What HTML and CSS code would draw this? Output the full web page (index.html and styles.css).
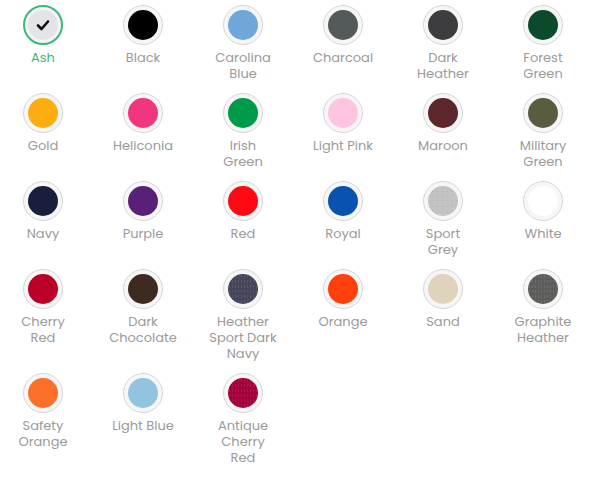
FILE: index.html
```html
<!DOCTYPE html>
<html lang="en">
  <head>
    <meta charset="UTF-8" />
    <meta name="viewport" content="width=device-width, initial-scale=1.0" />
    <title>Colors</title>
    <link rel="stylesheet" href="styles.css">
  </head>

  <body>
    <div class="colors">
      <div class="color selected">
        <span class="swatch"><span class="fill" style="background: #e4e4e8;">
          <svg class="check" width="14" height="12" viewBox="0 0 14 12"><path d="M2 6.5 L5.5 10 L12 2.5" fill="none" stroke="#111" stroke-width="2.6" stroke-linecap="round" stroke-linejoin="round"/></svg>
        </span></span>
        <span class="name">Ash</span>
      </div>
      <div class="color">
        <span class="swatch"><span class="fill" style="background: #000000;"></span></span>
        <span class="name">Black</span>
      </div>
      <div class="color">
        <span class="swatch"><span class="fill" style="background: #6fa7da;"></span></span>
        <span class="name">Carolina<br />Blue</span>
      </div>
      <div class="color">
        <span class="swatch"><span class="fill" style="background: #535a59;"></span></span>
        <span class="name">Charcoal</span>
      </div>
      <div class="color">
        <span class="swatch"><span class="fill" style="background: #3d3d3f;"></span></span>
        <span class="name">Dark<br />Heather</span>
      </div>
      <div class="color">
        <span class="swatch"><span class="fill" style="background: #0b4a2b;"></span></span>
        <span class="name">Forest<br />Green</span>
      </div>

      <div class="color">
        <span class="swatch"><span class="fill" style="background: #fdad10;"></span></span>
        <span class="name">Gold</span>
      </div>
      <div class="color">
        <span class="swatch"><span class="fill" style="background: #f2357f;"></span></span>
        <span class="name">Heliconia</span>
      </div>
      <div class="color">
        <span class="swatch"><span class="fill" style="background: #009b4a;"></span></span>
        <span class="name">Irish<br />Green</span>
      </div>
      <div class="color">
        <span class="swatch"><span class="fill" style="background: #ffc4e0;"></span></span>
        <span class="name">Light Pink</span>
      </div>
      <div class="color">
        <span class="swatch"><span class="fill" style="background: #5d262b;"></span></span>
        <span class="name">Maroon</span>
      </div>
      <div class="color">
        <span class="swatch"><span class="fill" style="background: #595c3f;"></span></span>
        <span class="name">Military<br />Green</span>
      </div>

      <div class="color">
        <span class="swatch"><span class="fill" style="background: #181e3d;"></span></span>
        <span class="name">Navy</span>
      </div>
      <div class="color">
        <span class="swatch"><span class="fill" style="background: #582177;"></span></span>
        <span class="name">Purple</span>
      </div>
      <div class="color">
        <span class="swatch"><span class="fill" style="background: #ff0a14;"></span></span>
        <span class="name">Red</span>
      </div>
      <div class="color">
        <span class="swatch"><span class="fill" style="background: #0a52b0;"></span></span>
        <span class="name">Royal</span>
      </div>
      <div class="color">
        <span class="swatch"><span class="fill textured" style="background-color: #c2c2c2;"></span></span>
        <span class="name">Sport<br />Grey</span>
      </div>
      <div class="color">
        <span class="swatch"><span class="fill" style="background: #ffffff;"></span></span>
        <span class="name">White</span>
      </div>

      <div class="color">
        <span class="swatch"><span class="fill" style="background: #ba0026;"></span></span>
        <span class="name">Cherry<br />Red</span>
      </div>
      <div class="color">
        <span class="swatch"><span class="fill" style="background: #3d2b22;"></span></span>
        <span class="name">Dark<br />Chocolate</span>
      </div>
      <div class="color">
        <span class="swatch"><span class="fill textured" style="background-color: #46465a;"></span></span>
        <span class="name">Heather<br />Sport Dark<br />Navy</span>
      </div>
      <div class="color">
        <span class="swatch"><span class="fill" style="background: #ff400d;"></span></span>
        <span class="name">Orange</span>
      </div>
      <div class="color">
        <span class="swatch"><span class="fill" style="background: #e0d3bd;"></span></span>
        <span class="name">Sand</span>
      </div>
      <div class="color">
        <span class="swatch"><span class="fill textured" style="background-color: #5d5d5b;"></span></span>
        <span class="name">Graphite<br />Heather</span>
      </div>

      <div class="color">
        <span class="swatch"><span class="fill" style="background: #fb7028;"></span></span>
        <span class="name">Safety<br />Orange</span>
      </div>
      <div class="color">
        <span class="swatch"><span class="fill" style="background: #92c3df;"></span></span>
        <span class="name">Light Blue</span>
      </div>
      <div class="color">
        <span class="swatch"><span class="fill textured" style="background-color: #a3003c;"></span></span>
        <span class="name">Antique<br />Cherry<br />Red</span>
      </div>
    </div>
  </body>
</html>
```

FILE: styles.css
```css
body {
  margin: 0;
  background-color: white;
  font-family: "Poppins", "Open Sans", "DejaVu Sans", sans-serif;
}

.colors {
  display: grid;
  grid-template-columns: repeat(6, 86px);
  column-gap: 14px;
  row-gap: 11px;
  padding-top: 5px;
}

.color {
  display: flex;
  flex-direction: column;
  align-items: center;
}

.swatch {
  box-sizing: border-box;
  width: 40px;
  height: 40px;
  border: 1px solid #d6d6d6;
  border-radius: 50%;
  padding: 4px;
  background-color: #f6f6f6;
}

.fill {
  display: flex;
  align-items: center;
  justify-content: center;
  width: 100%;
  height: 100%;
  border-radius: 50%;
}

.textured {
  background-image:
    radial-gradient(rgba(255, 255, 255, 0.1) 0.5px, transparent 1px),
    radial-gradient(rgba(0, 0, 0, 0.08) 0.5px, transparent 1px);
  background-size: 3px 5px, 5px 3px;
  background-position: 0 0, 2px 1px;
}

.name {
  margin-top: 5px;
  font-size: 13px;
  line-height: 16px;
  color: #9a9a9a;
  text-align: center;
  white-space: nowrap;
}

.selected .swatch {
  border: 2px solid #3cb878;
  padding: 3px;
  background-color: #f4f4f6;
}

.selected .name {
  color: #3cb878;
}
```
